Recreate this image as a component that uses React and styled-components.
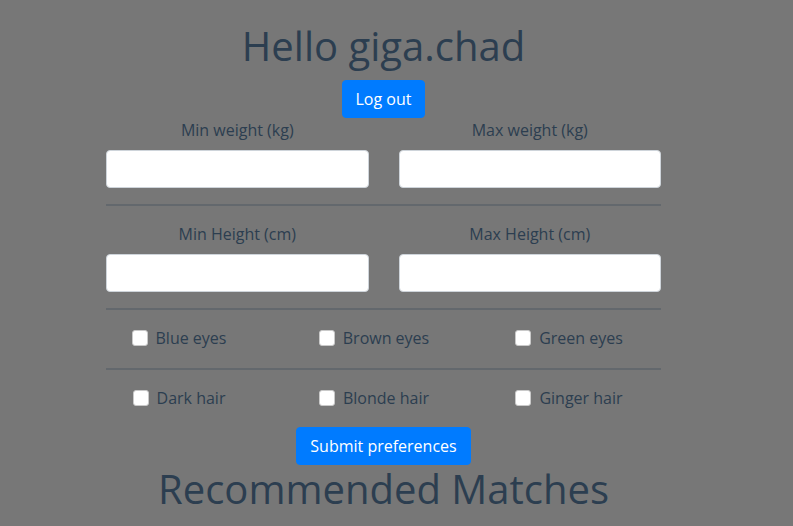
import React from "react";
import styled, { createGlobalStyle } from "styled-components";

const Global = createGlobalStyle`
  html, body { margin: 0; padding: 0; background: #777777; }
  body { font-family: "Open Sans", "Noto Sans", sans-serif; color: #2c3e50; }
  * { box-sizing: border-box; }
`;

const Page = styled.div`
  min-height: 526px;
  padding: 22px 26px 0 0;
  text-align: center;
  overflow: hidden;
`;

const Title = styled.h1`
  margin: 0 0 ${(p) => p.$mb || 0}px;
  font-size: 40px;
  font-weight: 400;
  line-height: 48px;
  color: #2c3e50;
`;

const Button = styled.button`
  display: inline-block;
  font-family: inherit;
  font-size: 16px;
  line-height: 24px;
  padding: 6px 13px;
  border: 1px solid #007bff;
  border-radius: 4px;
  background: #007bff;
  color: #ffffff;
  cursor: pointer;
`;

const Form = styled.form`
  width: 555px;
  margin: 0 auto;
`;

const FieldRow = styled.div`
  display: grid;
  grid-template-columns: 1fr 1fr;
  column-gap: 30px;
`;

const Field = styled.div`
  display: flex;
  flex-direction: column;
  align-items: stretch;
`;

const Label = styled.label`
  font-size: 16px;
  line-height: 24px;
  margin-bottom: 8px;
`;

const Input = styled.input`
  height: 38px;
  width: 100%;
  border: 1px solid #ced4da;
  border-radius: 4px;
  background: #ffffff;
  font-family: inherit;
  font-size: 16px;
  padding: 6px 12px;
`;

const Rule = styled.hr`
  margin: 16px 0;
  border: 0;
  border-top: 2px solid #63686d;
`;

const CheckRow = styled.div`
  display: grid;
  grid-template-columns: repeat(3, 195px);
  justify-content: center;
  width: 793px;
  margin-left: -119px;
  padding-bottom: ${(p) => p.$pb || 0}px;
`;

const CheckCell = styled.div`
  display: flex;
  justify-content: center;
  padding-right: 19px;
`;

const CheckLabel = styled.label`
  display: inline-flex;
  align-items: center;
  gap: 8px;
  font-size: 16px;
  line-height: 24px;
`;

const Box = styled.input`
  appearance: none;
  margin: 0;
  width: 16px;
  height: 16px;
  border: 1px solid #c9c9c9;
  border-radius: 3px;
  background: #ffffff;
`;

const Actions = styled.div`
  margin-top: 15px;
`;

const fields = [
  ["Min weight (kg)", "Max weight (kg)"],
  ["Min Height (cm)", "Max Height (cm)"],
];

const checks = [
  ["Blue eyes", "Brown eyes", "Green eyes"],
  ["Dark hair", "Blonde hair", "Ginger hair"],
];

export default function App() {
  return (
    <>
      <Global />
      <Page>
        <Title $mb={10}>Hello giga.chad</Title>
        <Button type="button">Log out</Button>
        <Form onSubmit={(e) => e.preventDefault()}>
          {fields.map((row, i) => (
            <React.Fragment key={i}>
              <FieldRow>
                {row.map((f) => (
                  <Field key={f}>
                    <Label>{f}</Label>
                    <Input type="number" />
                  </Field>
                ))}
              </FieldRow>
              <Rule />
            </React.Fragment>
          ))}
          {checks.map((row, i) => (
            <React.Fragment key={i}>
              <CheckRow $pb={2}>
                {row.map((c) => (
                  <CheckCell key={c}>
                    <CheckLabel>
                      <Box type="checkbox" />
                      {c}
                    </CheckLabel>
                  </CheckCell>
                ))}
              </CheckRow>
              {i === 0 && <Rule />}
            </React.Fragment>
          ))}
          <Actions>
            <Button type="submit">Submit preferences</Button>
          </Actions>
        </Form>
        <Title>Recommended Matches</Title>
      </Page>
    </>
  );
}
